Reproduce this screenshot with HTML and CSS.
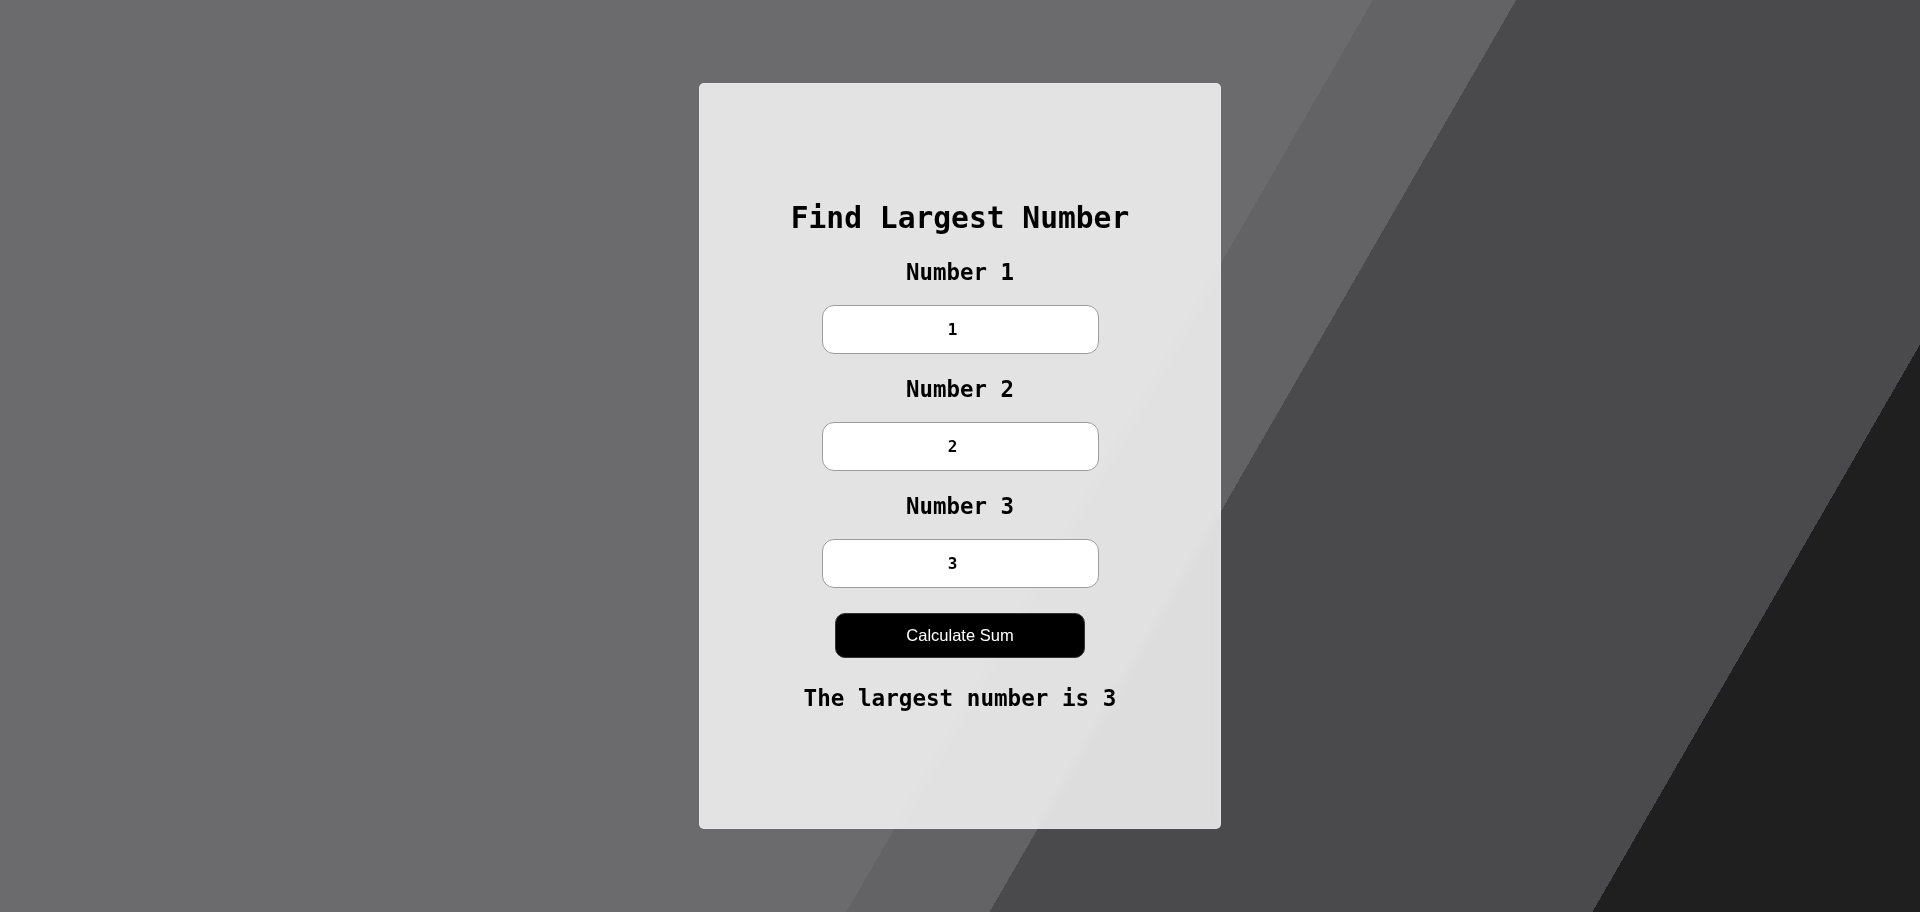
FILE: index.html
```html
<!DOCTYPE html>
<html lang="en">
<head>
<meta charset="utf-8">
<title>Find Largest Number</title>
<link rel="stylesheet" href="styles.css">
</head>
<body>
<div class="page">
  <main class="card">
    <h1 class="title">Find Largest Number</h1>
    <label class="label" for="n1">Number 1</label>
    <input class="field" id="n1" type="number" value="1">
    <label class="label" for="n2">Number 2</label>
    <input class="field" id="n2" type="number" value="2">
    <label class="label" for="n3">Number 3</label>
    <input class="field" id="n3" type="number" value="3">
    <button class="btn" type="button">Calculate Sum</button>
    <p class="result">The largest number is 3</p>
  </main>
</div>
</body>
</html>
```
FILE: styles.css
```css
* { box-sizing: border-box; }

html, body {
  margin: 0;
  padding: 0;
}

body {
  font-family: "DejaVu Sans Mono", "Liberation Mono", monospace;
  color: #000;
}

.page {
  height: 100vh;
  display: flex;
  align-items: center;
  justify-content: center;
  background: linear-gradient(120deg,
    #6b6b6e 0 1189px,
    #636365 1189px 1313px,
    #4a4a4c 1313px 1835px,
    #1f1f1f 1835px);
}

.card {
  width: 522px;
  height: 746px;
  border-radius: 5px;
  border: 1px solid rgba(255, 255, 255, 0.2);
  background: rgba(255, 255, 255, 0.81);
  backdrop-filter: blur(4px);
  display: flex;
  flex-direction: column;
  align-items: center;
  justify-content: center;
}

.title {
  margin: 0 0 22px;
  font-size: 29.6px;
  line-height: 36px;
  font-weight: bold;
}

.label {
  display: block;
  margin: 0 0 19px;
  font-size: 22.4px;
  line-height: 28px;
  font-weight: bold;
}

.field + .label {
  margin-top: 21px;
}

.field {
  width: 277px;
  height: 49px;
  margin: 0;
  padding: 1px 2px;
  border: 1px solid #9d9d9d;
  border-radius: 12px;
  background: #fff;
  font-family: "DejaVu Sans Mono", monospace;
  font-size: 16px;
  font-weight: bold;
  color: #000;
  text-align: center;
  outline: none;
}

.btn {
  margin-top: 25px;
  width: 250px;
  height: 45px;
  border: 1px solid #333;
  border-radius: 10px;
  background: #000;
  color: #fff;
  font-family: "Liberation Sans", Arial, sans-serif;
  font-size: 16.5px;
  cursor: pointer;
}

.result {
  margin: 26px 0 0;
  font-size: 22.6px;
  line-height: 28px;
  font-weight: bold;
}
```
